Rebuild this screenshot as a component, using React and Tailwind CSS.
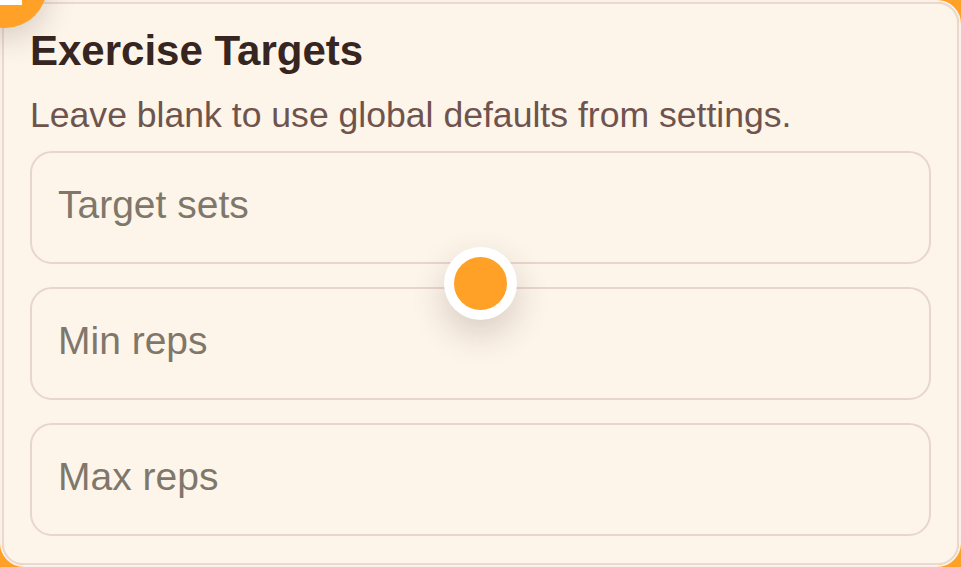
import { useState } from "react";

const fields = [
  { key: "sets", label: "Target sets" },
  { key: "min", label: "Min reps" },
  { key: "max", label: "Max reps" },
];

export default function App() {
  const [values, setValues] = useState({ sets: "", min: "", max: "" });

  return (
    <div
      className="relative h-[567px] w-full overflow-hidden bg-[#ffa126]"
      style={{ fontFamily: '"Liberation Sans", Arial, sans-serif' }}
    >
      {/* Card */}
      <div className="h-full rounded-[24px] border-2 border-[#fbf0ea]">
        <div className="h-full rounded-[21px] border-2 border-[#ead9d1] bg-[#fdf5ea] px-[26px] pt-[26px]">
          <h2 className="text-[42px] font-bold leading-none text-[#362520]">
            Exercise Targets
          </h2>
          <p className="mt-[26px] text-[35.6px] leading-none text-[#6f534d]">
            Leave blank to use global defaults from settings.
          </p>

          <div className="mt-[17px] flex flex-col gap-[23px]">
            {fields.map((f) => (
              <input
                key={f.key}
                type="text"
                placeholder={f.label}
                value={values[f.key]}
                onChange={(e) =>
                  setValues({ ...values, [f.key]: e.target.value })
                }
                className="h-[113px] w-full rounded-[22px] border-2 border-[#e8d6cd] bg-[#fdf5ea] pb-[4px] pl-[26px] text-[39px] text-[#3a2a24] outline-none placeholder:text-[#80776b]"
              />
            ))}
          </div>
        </div>
      </div>

      {/* Corner marker */}
      <div className="absolute left-[-37px] top-[-56px] h-[84px] w-[84px] rounded-full bg-[#ffa126] shadow-[0_10px_30px_rgba(70,40,30,0.2)]" />
      <div className="absolute left-0 top-0 h-[5px] w-[22px] bg-white" />

      {/* Drag dot */}
      <div className="absolute left-[444px] top-[247px] flex h-[73px] w-[73px] items-center justify-center rounded-full bg-white shadow-[0_14px_34px_rgba(70,40,30,0.2)]">
        <div className="h-[53px] w-[53px] rounded-full bg-[#ffa126]" />
      </div>
    </div>
  );
}
